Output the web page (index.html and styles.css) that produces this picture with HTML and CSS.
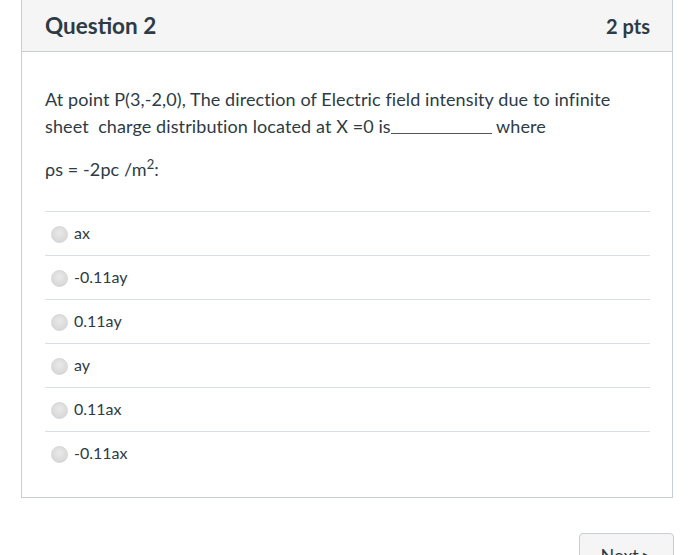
FILE: index.html
```html
<!DOCTYPE html>
<html>
<head>
<meta charset="utf-8">
<link rel="stylesheet" href="styles.css">
</head>
<body>
<div class="page">
  <div class="card">
    <div class="card-header">
      <span class="title">Question 2</span>
      <span class="pts">2 pts</span>
    </div>
    <div class="card-body">
      <p class="question">At point P(3,-2,0), The direction of Electric field intensity due to infinite sheet&nbsp; charge distribution located at X =0 is<span class="blank"></span> where</p>
      <p class="question formula">ρs = -2pc /m<sup>2</sup>:</p>
      <div class="answers">
        <label class="answer"><span class="radio"></span><span class="atext">ax</span></label>
        <label class="answer"><span class="radio"></span><span class="atext">-0.11ay</span></label>
        <label class="answer"><span class="radio"></span><span class="atext">0.11ay</span></label>
        <label class="answer"><span class="radio"></span><span class="atext">ay</span></label>
        <label class="answer"><span class="radio"></span><span class="atext">0.11ax</span></label>
        <label class="answer"><span class="radio"></span><span class="atext">-0.11ax</span></label>
      </div>
    </div>
  </div>
  <div class="footer">
    <button class="next">Next ▸</button>
  </div>
</div>
</body>
</html>
```

FILE: styles.css
```css
html, body {
  margin: 0;
  padding: 0;
  background: #fff;
}
body {
  font-family: Lato, "Open Sans", sans-serif;
  color: #2d3b45;
  width: 700px;
  height: 555px;
  overflow: hidden;
}
.page {
  width: 652px;
  margin-left: 21px;
}
.card {
  border: 1px solid #c7cdd1;
  border-top: 0;
  box-sizing: border-box;
}
.card-header {
  height: 52px;
  box-sizing: border-box;
  background: #f5f5f5;
  border-bottom: 1px solid #c7cdd1;
  display: flex;
  justify-content: space-between;
  align-items: center;
  padding: 0 22px 0 23px;
}
.title {
  font-size: 22.5px;
  font-weight: 700;
}
.pts {
  font-size: 20px;
  font-weight: 700;
}
.card-body {
  padding: 34px 22px 22px 23px;
}
.question {
  margin: 0;
  font-size: 18px;
  letter-spacing: 0.1px;
  line-height: 27px;
}
.formula {
  margin-top: 16px;
}
.formula sup {
  font-size: 13px;
  line-height: 0;
}
.blank {
  display: inline-block;
  width: 101px;
  height: 1px;
  background: #555;
  vertical-align: -1px;
}
.answers {
  margin-top: 28px;
}
.answer {
  display: flex;
  align-items: center;
  height: 43px;
  box-sizing: content-box;
  border-top: 1px solid #dadfe2;
  padding-left: 6px;
}
.radio {
  width: 17px;
  height: 17px;
  border-radius: 50%;
  box-sizing: border-box;
  border: 1px solid #d6d6d6;
  background: radial-gradient(circle at 50% 40%, #e9e9e9 0%, #d9d9d9 70%, #cfcfcf 100%);
  margin-right: 6px;
  margin-top: 1px;
}
.atext {
  font-size: 16px;
  margin-bottom: 2px;
}
.footer {
  display: flex;
  justify-content: flex-end;
  margin-top: 35px;
}
.next {
  width: 95px;
  height: 40px;
  background: #f5f5f5;
  border: 1px solid #c7cdd1;
  border-radius: 4px;
  font-family: Lato, sans-serif;
  font-size: 18px;
  color: #2d3b45;
  padding: 3px 0 0 0;
  text-align: center;
  box-sizing: border-box;
  align-self: flex-start;
  margin-right: -1px;
}
```
